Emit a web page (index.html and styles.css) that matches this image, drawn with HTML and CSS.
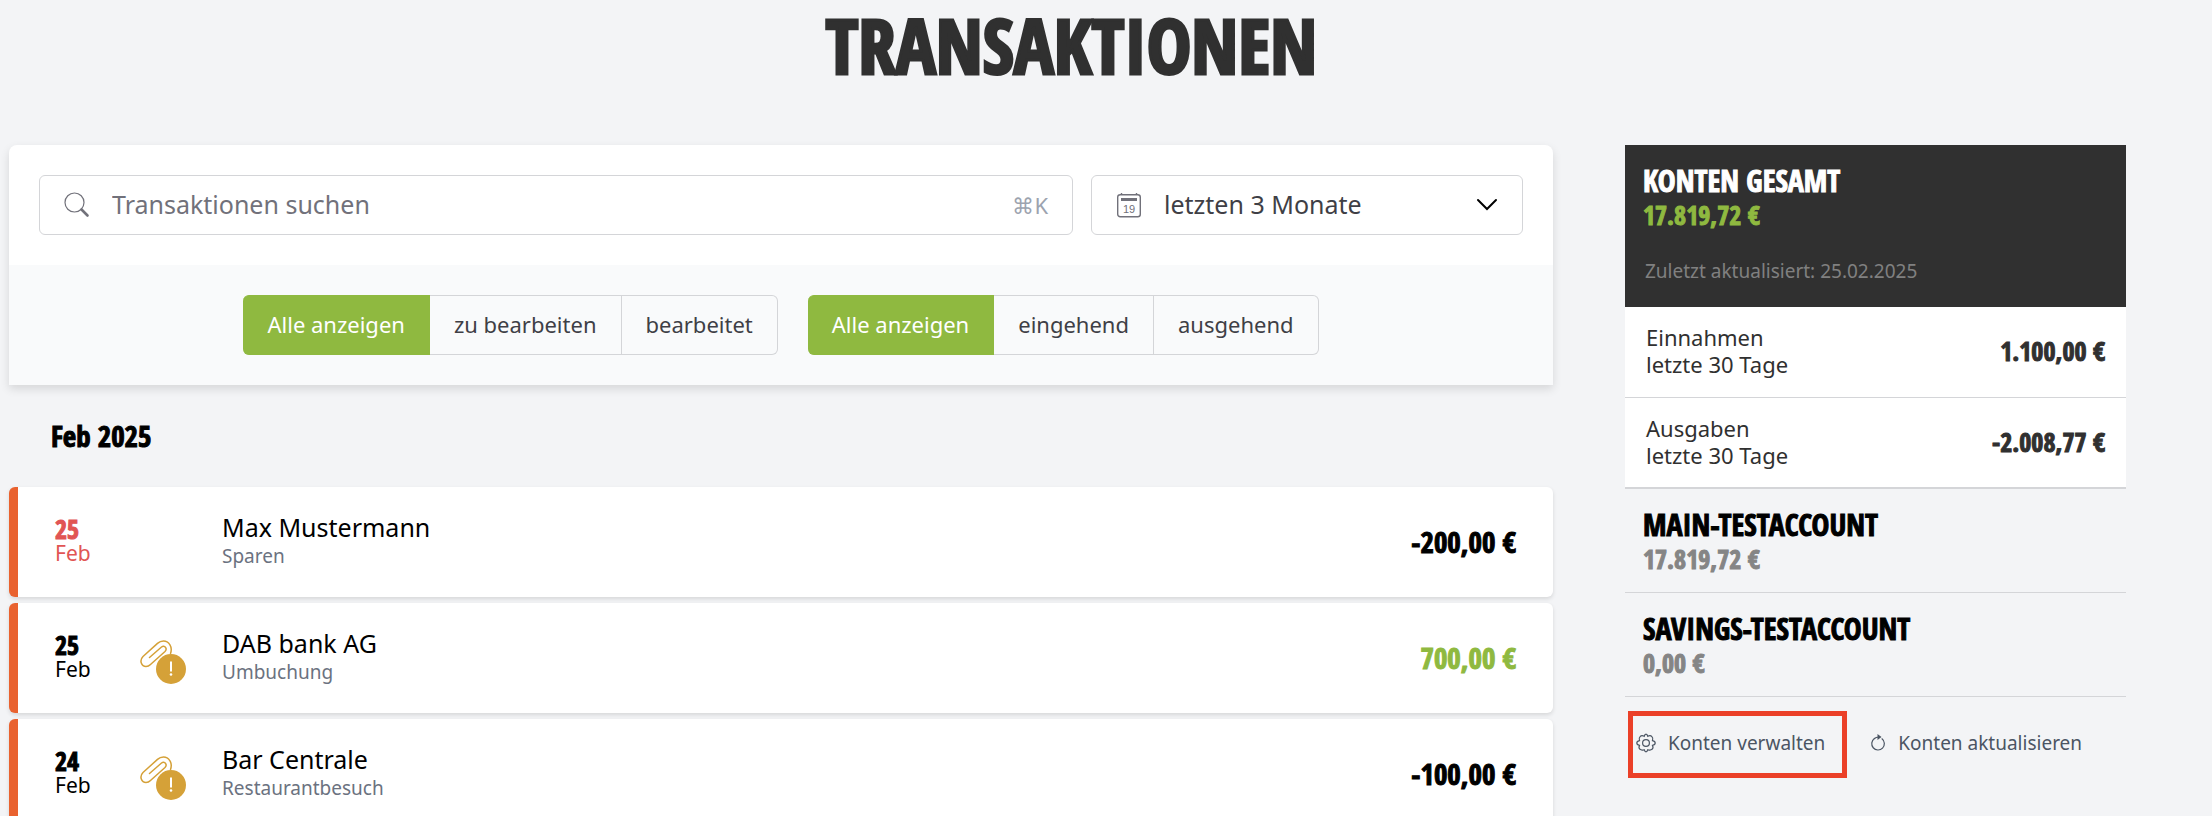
FILE: index.html
```html
<!DOCTYPE html>
<html lang="de">
<head>
<meta charset="utf-8">
<title>Transaktionen</title>
<meta name="viewport" content="width=device-width, initial-scale=1">
<link rel="stylesheet" href="styles.css">
</head>
<body>
<svg width="0" height="0" class="sprite" aria-hidden="true">
  <symbol id="clip" viewBox="0 0 46 44">
    <path d="M30.500 13.500C33 6.500 28.500 1 23.500 1c-2.500 0-4.500 1-6 2.400L3 16.500C-1 20.500 1.500 26.500 6 26.500c2 0 3.500-1 4.500-2L25 11.500C27.800 8.500 24.500 4.500 21.500 7L9.500 17.500" fill="none" stroke="#d5a138" stroke-width="1.500" stroke-linecap="round"/>
    <circle cx="31" cy="29" r="15" fill="#d5a138"/>
    <path d="M31 21.500v10" stroke="#fff" stroke-width="2"/>
    <circle cx="31" cy="34.500" r="1.300" fill="#fff"/>
  </symbol>
</svg>
<div class="page">
  <h1 class="page-title">TRANSAKTIONEN</h1>
  <div class="columns">
    <main>
      <section class="panel">
        <div class="search-row">
          <label class="field">
            <svg class="icon" width="26" height="26" viewBox="0 0 26 26" aria-hidden="true"><circle cx="10.500" cy="10.500" r="9.500" fill="none" stroke="#71717a" stroke-width="1.200"/><path d="M17.500 17.500l6 6" stroke="#71717a" stroke-width="2.600" stroke-linecap="round"/></svg>
            <input class="control" type="search" placeholder="Transaktionen suchen" aria-label="Transaktionen suchen">
            <kbd class="shortcut">⌘K</kbd>
          </label>
          <label class="field">
            <svg class="icon" width="26" height="26" viewBox="0 0 26 26" aria-hidden="true"><rect x="1.700" y="2.700" width="22.600" height="22" rx="2.500" fill="none" stroke="#71717a" stroke-width="1.400"/><path d="M5.500 1v2M20.500 1v2" stroke="#71717a" stroke-width="1.400"/><path d="M5 7.500h16" stroke="#71717a" stroke-width="3"/><text x="13" y="20.500" class="calendar-day">19</text></svg>
            <select class="control" aria-label="Zeitraum"><option>letzten 3 Monate</option></select>
            <svg class="chevron" width="22" height="14" viewBox="0 0 22 14" aria-hidden="true"><path d="M2 2l9 9 9-9" fill="none" stroke="#000" stroke-width="2" stroke-linecap="round"/></svg>
          </label>
        </div>
        <div class="filters">
          <div class="segment" role="group" aria-label="Status">
            <button class="active" aria-pressed="true">Alle anzeigen</button><button>zu bearbeiten</button><button>bearbeitet</button>
          </div>
          <div class="segment" role="group" aria-label="Richtung">
            <button class="active" aria-pressed="true">Alle anzeigen</button><button>eingehend</button><button>ausgehend</button>
          </div>
        </div>
      </section>
      <h2 class="month">Feb 2025</h2>
      <ul class="transactions">
        <li class="transaction">
          <div class="date pending"><b>25</b><span>Feb</span></div>
          <div class="attachment"></div>
          <div class="details"><span class="name">Max Mustermann</span><span class="category">Sparen</span></div>
          <span class="amount">-200,00 €</span>
        </li>
        <li class="transaction">
          <div class="date"><b>25</b><span>Feb</span></div>
          <div class="attachment"><svg width="46" height="44" aria-hidden="true"><use href="#clip"/></svg></div>
          <div class="details"><span class="name">DAB bank AG</span><span class="category">Umbuchung</span></div>
          <span class="amount incoming">700,00 €</span>
        </li>
        <li class="transaction">
          <div class="date"><b>24</b><span>Feb</span></div>
          <div class="attachment"><svg width="46" height="44" aria-hidden="true"><use href="#clip"/></svg></div>
          <div class="details"><span class="name">Bar Centrale</span><span class="category">Restaurantbesuch</span></div>
          <span class="amount">-100,00 €</span>
        </li>
      </ul>
    </main>
    <aside>
      <section class="total">
        <h2 class="account-name">KONTEN GESAMT</h2>
        <p class="balance">17.819,72 €</p>
        <p class="updated">Zuletzt aktualisiert: 25.02.2025</p>
      </section>
      <div class="summary"><span>Einnahmen<br>letzte 30 Tage</span><b class="sum">1.100,00 €</b></div>
      <div class="summary last"><span>Ausgaben<br>letzte 30 Tage</span><b class="sum">-2.008,77 €</b></div>
      <section class="account">
        <h2 class="account-name">MAIN-TESTACCOUNT</h2>
        <p class="balance">17.819,72 €</p>
      </section>
      <section class="account">
        <h2 class="account-name">SAVINGS-TESTACCOUNT</h2>
        <p class="balance">0,00 €</p>
      </section>
      <div class="actions">
        <div class="highlight">
          <button class="action"><svg width="20" height="20" viewBox="0 0 20 20" aria-hidden="true"><g fill="none" stroke="#4b5563" stroke-width="1.200"><path d="M10 1.200Q11.300 1.200 11.800 3.300Q14.300 1.800 15.900 3.600Q17.500 5.200 16.500 7.600Q19.200 8.200 19.200 10Q19.200 11.800 16.500 12.400Q17.700 14.800 16.100 16.200Q14.500 17.800 11.800 16.700Q11.200 18.900 10 18.900Q8.800 18.900 8.200 16.700Q5.500 17.800 3.900 16.200Q2.300 14.800 3.500 12.400Q.8 11.800.8 10Q.8 8.200 3.500 7.600Q2.500 5.200 4.100 3.600Q5.700 1.800 8.200 3.300Q8.700 1.200 10 1.200z"/><circle cx="10" cy="10" r="3.400"/></g></svg>Konten verwalten</button>
        </div>
        <button class="action refresh"><svg width="16" height="20" viewBox="0 0 16 20" aria-hidden="true"><path d="M4.500 5.500A6.300 6.300 0 1 0 12 5.800M3.800 6Q6 4 9 4" fill="none" stroke="#4b5563" stroke-width="1.200" stroke-linecap="round"/><path d="M7.500 1l4 3-4 3z" fill="#4b5563"/></svg>Konten aktualisieren</button>
      </div>
    </aside>
  </div>
</div>
</body>
</html>
```
FILE: styles.css
```css
:root {
  --body: "Noto Sans", "Open Sans", sans-serif;
  --display: "Noto Sans ExtraCondensed", "Open Sans Condensed", "Noto Sans Condensed", "Roboto Condensed", "Liberation Sans Narrow", sans-serif;
  --line: #d4d5d8;
  --green: #8fb940;
}
* { box-sizing: border-box; margin: 0; }
body { background: #f3f4f6; font: 22px/28px var(--body); color: #000; overflow: hidden; }
.sprite { position: absolute; }
.page { padding: 0 86px 0 9px; }
.page-title { padding-left: 8px; font: 900 75px/90px var(--display); color: #303030; text-align: center; -webkit-text-stroke: 3px; }
.columns { display: grid; grid-template-columns: 1544fr 501fr; gap: 72px; align-items: start; padding-top: 55px; }
.panel { background: #fff; border-radius: 8px 8px 0 0; box-shadow: 0 4px 10px rgb(0 0 0 / 12%); }
.search-row { display: grid; grid-template-columns: 1034fr 432fr; gap: 18px; padding: 30px; }
.field { display: flex; align-items: center; height: 60px; padding: 0 24px; border: 1px solid var(--line); border-radius: 6px; }
.icon { flex: none; margin-right: 22px; }
.control { flex: 1; min-width: 0; appearance: none; border: 0; outline: 0; padding: 0 0 2px; background: none; font: 25px/34px var(--body); color: #3f3f46; }
.control::placeholder { color: #71717a; opacity: 1; }
.calendar-day { font: 11px "Liberation Sans", sans-serif; fill: #71717a; text-anchor: middle; }
.shortcut { font: 22px/28px var(--body); color: #9ca3af; }
.filters { display: flex; justify-content: center; gap: 30px; padding: 30px; background: #f9fafb; }
.segment { display: flex; }
.segment button { height: 60px; padding: 0 24px 2px; border: 1px solid var(--line); border-left-width: 0; background: none; font: 22px/28px var(--body); color: #3f3f46; }
.segment button:first-child { border-radius: 6px 0 0 6px; }
.segment button:last-child { border-radius: 0 6px 6px 0; }
.segment .active { background: var(--green); border-color: var(--green); color: #fff; }
.month, .date b, .amount, .account-name, .balance, .sum { -webkit-text-stroke: 1px; }
.month { padding: 32px 42px; font: 900 29px/38px var(--display); }
.transactions { display: grid; gap: 6px; padding: 0; list-style: none; }
.transaction { display: flex; align-items: center; height: 110px; padding: 0 37px; background: #fff; border-left: 9px solid #e9622f; border-radius: 6px; box-shadow: 0 2px 4px rgb(0 0 0 / 12%); }
.date { display: grid; width: 85px; padding-bottom: 4px; font-size: 21px; line-height: 22px; }
.date b { font: 900 26px/26px var(--display); }
.pending { color: #e15554; }
.attachment { width: 82px; padding-top: 12px; }
.details { display: grid; flex: 1; padding-bottom: 2px; }
.name { font-size: 25px; line-height: 30px; }
.category { font-size: 19px; line-height: 28px; color: #6b7280; }
.amount { font: 900 29px/36px var(--display); }
.incoming { color: var(--green); }
.total { padding: 18px 18px 2px; background: #303030; color: #fff; }
.account-name { font: 900 30px/36px var(--display); }
.balance { font: 900 26px/32px var(--display); color: #858585; }
.total .balance { color: var(--green); }
.updated { padding: 26px 2px 20px; font-size: 19px; line-height: 28px; color: #808080; }
.summary { display: flex; align-items: center; justify-content: space-between; height: 91px; padding: 0 21px 2px; background: #fff; border-bottom: 1px solid var(--line); line-height: 27px; color: #303030; }
.last { border-bottom-width: 2px; }
.sum { font: 900 26px/32px var(--display); }
.account { padding: 18px 18px 17px; border-bottom: 1px solid var(--line); }
.actions { display: flex; align-items: flex-start; gap: 20px; padding: 14px 3px; }
.highlight { padding: 4px 14px 8px 0; border: 5px solid #eb4028; }
.action { display: flex; align-items: center; gap: 12px; height: 45px; padding: 0 3px; border: 0; background: none; font: 19px/28px var(--body); color: #4b5563; }
.refresh { margin-top: 9px; }
```
